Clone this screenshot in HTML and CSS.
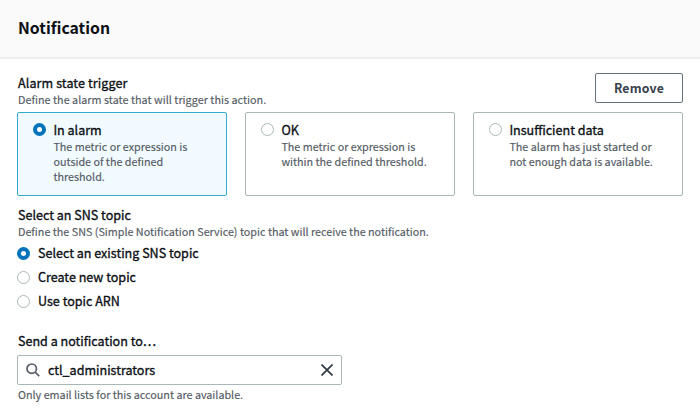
FILE: index.html
```html
<!DOCTYPE html>
<html lang="en">
<head>
<meta charset="utf-8">
<title>Notification</title>
<link rel="stylesheet" href="styles.css">
</head>
<body>
<header class="header"><h1 class="title">Notification</h1></header>
<main class="content">
  <section class="trigger">
    <div class="trigger-head">
      <div>
        <h2 class="label label-wide">Alarm state trigger</h2>
        <p class="help">Define the alarm state that will trigger this action.</p>
      </div>
      <button class="remove">Remove</button>
    </div>
    <div class="tiles">
      <div class="tile tile-selected">
        <span class="radio radio-on"></span>
        <div>
          <div class="label">In alarm</div>
          <p class="help">The metric or expression is<br>outside of the defined<br>threshold.</p>
        </div>
      </div>
      <div class="tile">
        <span class="radio"></span>
        <div>
          <div class="label">OK</div>
          <p class="help">The metric or expression is<br>within the defined threshold.</p>
        </div>
      </div>
      <div class="tile">
        <span class="radio"></span>
        <div>
          <div class="label">Insufficient data</div>
          <p class="help">The alarm has just started or<br>not enough data is available.</p>
        </div>
      </div>
    </div>
  </section>
  <section class="topic">
    <h2 class="label">Select an SNS topic</h2>
    <p class="help">Define the SNS (Simple Notification Service) topic that will receive the notification.</p>
    <div class="options">
      <div class="option"><span class="radio radio-on"></span><div class="label">Select an existing SNS topic</div></div>
      <div class="option"><span class="radio"></span><div class="label">Create new topic</div></div>
      <div class="option"><span class="radio"></span><div class="label">Use topic ARN</div></div>
    </div>
  </section>
  <section class="recipient">
    <h2 class="label">Send a notification to…</h2>
    <div class="field">
      <svg class="search" width="14" height="14" viewBox="0 0 14 14"><circle cx="5.7" cy="5.7" r="4.7"/><path d="M9 9l4.2 4.2"/></svg>
      <div class="label value">ctl_administrators</div>
      <svg class="clear" width="12" height="12" viewBox="0 0 12 12"><path d="M.5.5l11 11M11.500.5l-11 11"/></svg>
    </div>
    <p class="help">Only email lists for this account are available.</p>
  </section>
</main>
</body>
</html>
```
FILE: styles.css
```css
* { box-sizing: border-box; }
body {
  margin: 0;
  background: #fff;
  color: #16191f;
  font-family: "Noto Sans CJK SC", "Noto Sans", sans-serif;
}
h1, h2, p { margin: 0; font-weight: inherit; }
.header {
  height: 59px;
  padding: 16px 18px 0;
  background: #fafafa;
  border-bottom: 2px solid #eeeeee;
}
.title { font-size: 15.8px; line-height: 24px; font-weight: 700; color: #0c0f14; }
.content { padding: 15px 17px 0; }
.label {
  font-size: 12.55px;
  line-height: 18px;
  color: #0c0f14;
  -webkit-text-stroke: 0.32px #0c0f14;
  white-space: nowrap;
}
.label-wide { letter-spacing: 0.1px; }
.help {
  font-size: 10.78px;
  line-height: 15px;
  color: #545b64;
  -webkit-text-stroke: 0.15px #545b64;
  white-space: nowrap;
}
.trigger-head { display: flex; justify-content: space-between; height: 38px; padding-left: 1px; }
.trigger-head .help { letter-spacing: 0.03px; }
.remove {
  width: 88px;
  height: 30px;
  margin-top: -1px;
  padding: 0;
  background: #fff;
  border: 1px solid #687078;
  border-radius: 2px;
  color: #37404d;
  font: 700 12.3px/26px "Noto Sans CJK SC", "Noto Sans", sans-serif;
  letter-spacing: 0.2px;
}
.tiles { display: grid; grid-template-columns: repeat(3, 210px); gap: 18px; }
.tile {
  display: flex;
  gap: 7.4px;
  height: 84px;
  padding: 8px 15px;
  border: 1px solid #aab7b8;
  border-radius: 2px;
}
.tile-selected { background: #f1faff; border-color: #35abcb; }
.tile .radio { margin-top: 2px; }
.radio {
  flex: none;
  width: 13px;
  height: 13px;
  border: 1px solid #aab7b8;
  border-radius: 50%;
  background: #fff;
}
.radio-on { border: 4px solid #0073bb; }
.topic { margin-top: 10px; }
.topic > .label, .topic > .help, .recipient > .label, .recipient > .help { padding-left: 1px; }
.options { display: grid; gap: 6px; margin-top: 5px; }
.option { display: flex; gap: 8px; align-items: center; }
.recipient { margin-top: 22px; }
.field {
  display: flex;
  align-items: center;
  width: 325px;
  height: 30px;
  margin: 5px 0 2px;
  padding: 0 8px;
  border: 1px solid #aab7b8;
  border-radius: 2px;
}
.search, .clear { fill: none; stroke: #545b64; stroke-width: 1.7; }
.clear { margin-left: auto; stroke: #303846; }
.value { margin-left: 8px; }
```
